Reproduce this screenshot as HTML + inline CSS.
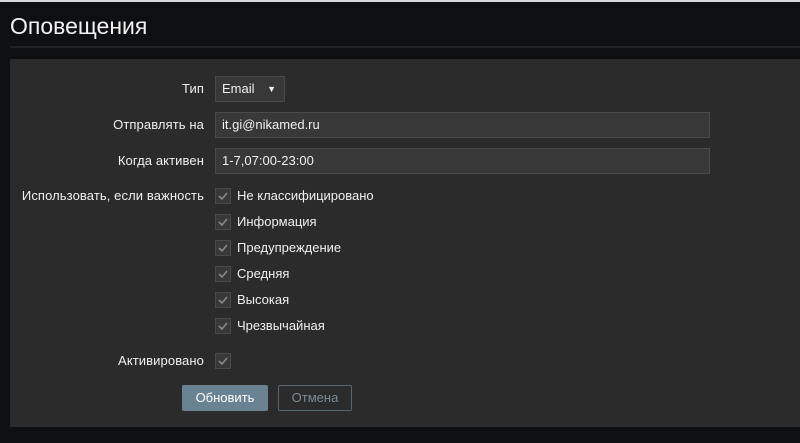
<!DOCTYPE html><html><head><style>
body{margin:0;width:800px;height:443px;background:#0e0f11;font-family:"Liberation Sans",Arial,sans-serif;overflow:hidden;position:relative;border-top:2px solid #d8d8d8;box-sizing:border-box}
h1{position:absolute;left:10px;top:11px;margin:0;font-weight:normal;font-size:23px;color:#f2f2f2}
.hl{position:absolute;left:10px;right:0;top:44px;height:2px;background:#202225}
.panel{position:absolute;left:10px;right:0;top:57px;height:368px;background:#2b2b2b}
.lbl{position:absolute;right:596px;font-size:13px;color:#f0f0f0;letter-spacing:0.1px}
.in{position:absolute;left:215px;background:#383838;border:1px solid #4a4a4a;box-sizing:border-box;color:#f0f0f0;font-size:13px;padding-left:6px}
.cb{position:absolute;left:215px;width:16px;height:16px;background:#383838;border:1px solid #4a4a4a;box-sizing:border-box}
.cb svg{position:absolute;left:2px;top:2px}
.ct{position:absolute;left:237px;font-size:13px;color:#f0f0f0}
.btn{position:absolute;top:383px;height:26px;box-sizing:border-box;font-size:13px;text-align:center;line-height:24px;border-radius:2px}
</style></head><body>
<h1>Оповещения</h1><div class="hl"></div>
<div class="panel"></div>
<div class="lbl" style="top:79px">Тип</div>
<div class="in" style="top:74px;width:70px;height:26px;line-height:24px">Email <span style="position:absolute;right:8px;font-size:9px">▼</span></div>
<div class="lbl" style="top:115px">Отправлять на</div>
<div class="in" style="top:110px;width:495px;height:26px;line-height:24px">it.gi@nikamed.ru</div>
<div class="lbl" style="top:151px">Когда активен</div>
<div class="in" style="top:146px;width:495px;height:26px;line-height:24px">1-7,07:00-23:00</div>
<div class="lbl" style="top:186px">Использовать, если важность</div>
<div class="cb" style="top:186px"><svg width="10" height="10"><path d="M1 5l3 3 5-6" stroke="#8a8a8a" stroke-width="1.6" fill="none"/></svg></div><div class="ct" style="top:186px">Не классифицировано</div>
<div class="cb" style="top:212px"><svg width="10" height="10"><path d="M1 5l3 3 5-6" stroke="#8a8a8a" stroke-width="1.6" fill="none"/></svg></div><div class="ct" style="top:212px">Информация</div>
<div class="cb" style="top:238px"><svg width="10" height="10"><path d="M1 5l3 3 5-6" stroke="#8a8a8a" stroke-width="1.6" fill="none"/></svg></div><div class="ct" style="top:238px">Предупреждение</div>
<div class="cb" style="top:264px"><svg width="10" height="10"><path d="M1 5l3 3 5-6" stroke="#8a8a8a" stroke-width="1.6" fill="none"/></svg></div><div class="ct" style="top:264px">Средняя</div>
<div class="cb" style="top:290px"><svg width="10" height="10"><path d="M1 5l3 3 5-6" stroke="#8a8a8a" stroke-width="1.6" fill="none"/></svg></div><div class="ct" style="top:290px">Высокая</div>
<div class="cb" style="top:316px"><svg width="10" height="10"><path d="M1 5l3 3 5-6" stroke="#8a8a8a" stroke-width="1.6" fill="none"/></svg></div><div class="ct" style="top:316px">Чрезвычайная</div>
<div class="lbl" style="top:351px">Активировано</div>
<div class="cb" style="top:351px"><svg width="10" height="10"><path d="M1 5l3 3 5-6" stroke="#8a8a8a" stroke-width="1.6" fill="none"/></svg></div>
<div class="btn" style="left:182px;width:86px;background:#6a8393;border:1px solid #6a8393;color:#fff">Обновить</div>
<div class="btn" style="left:278px;width:74px;border:1px solid #556670;color:#7c8a93">Отмена</div>
</body></html>
